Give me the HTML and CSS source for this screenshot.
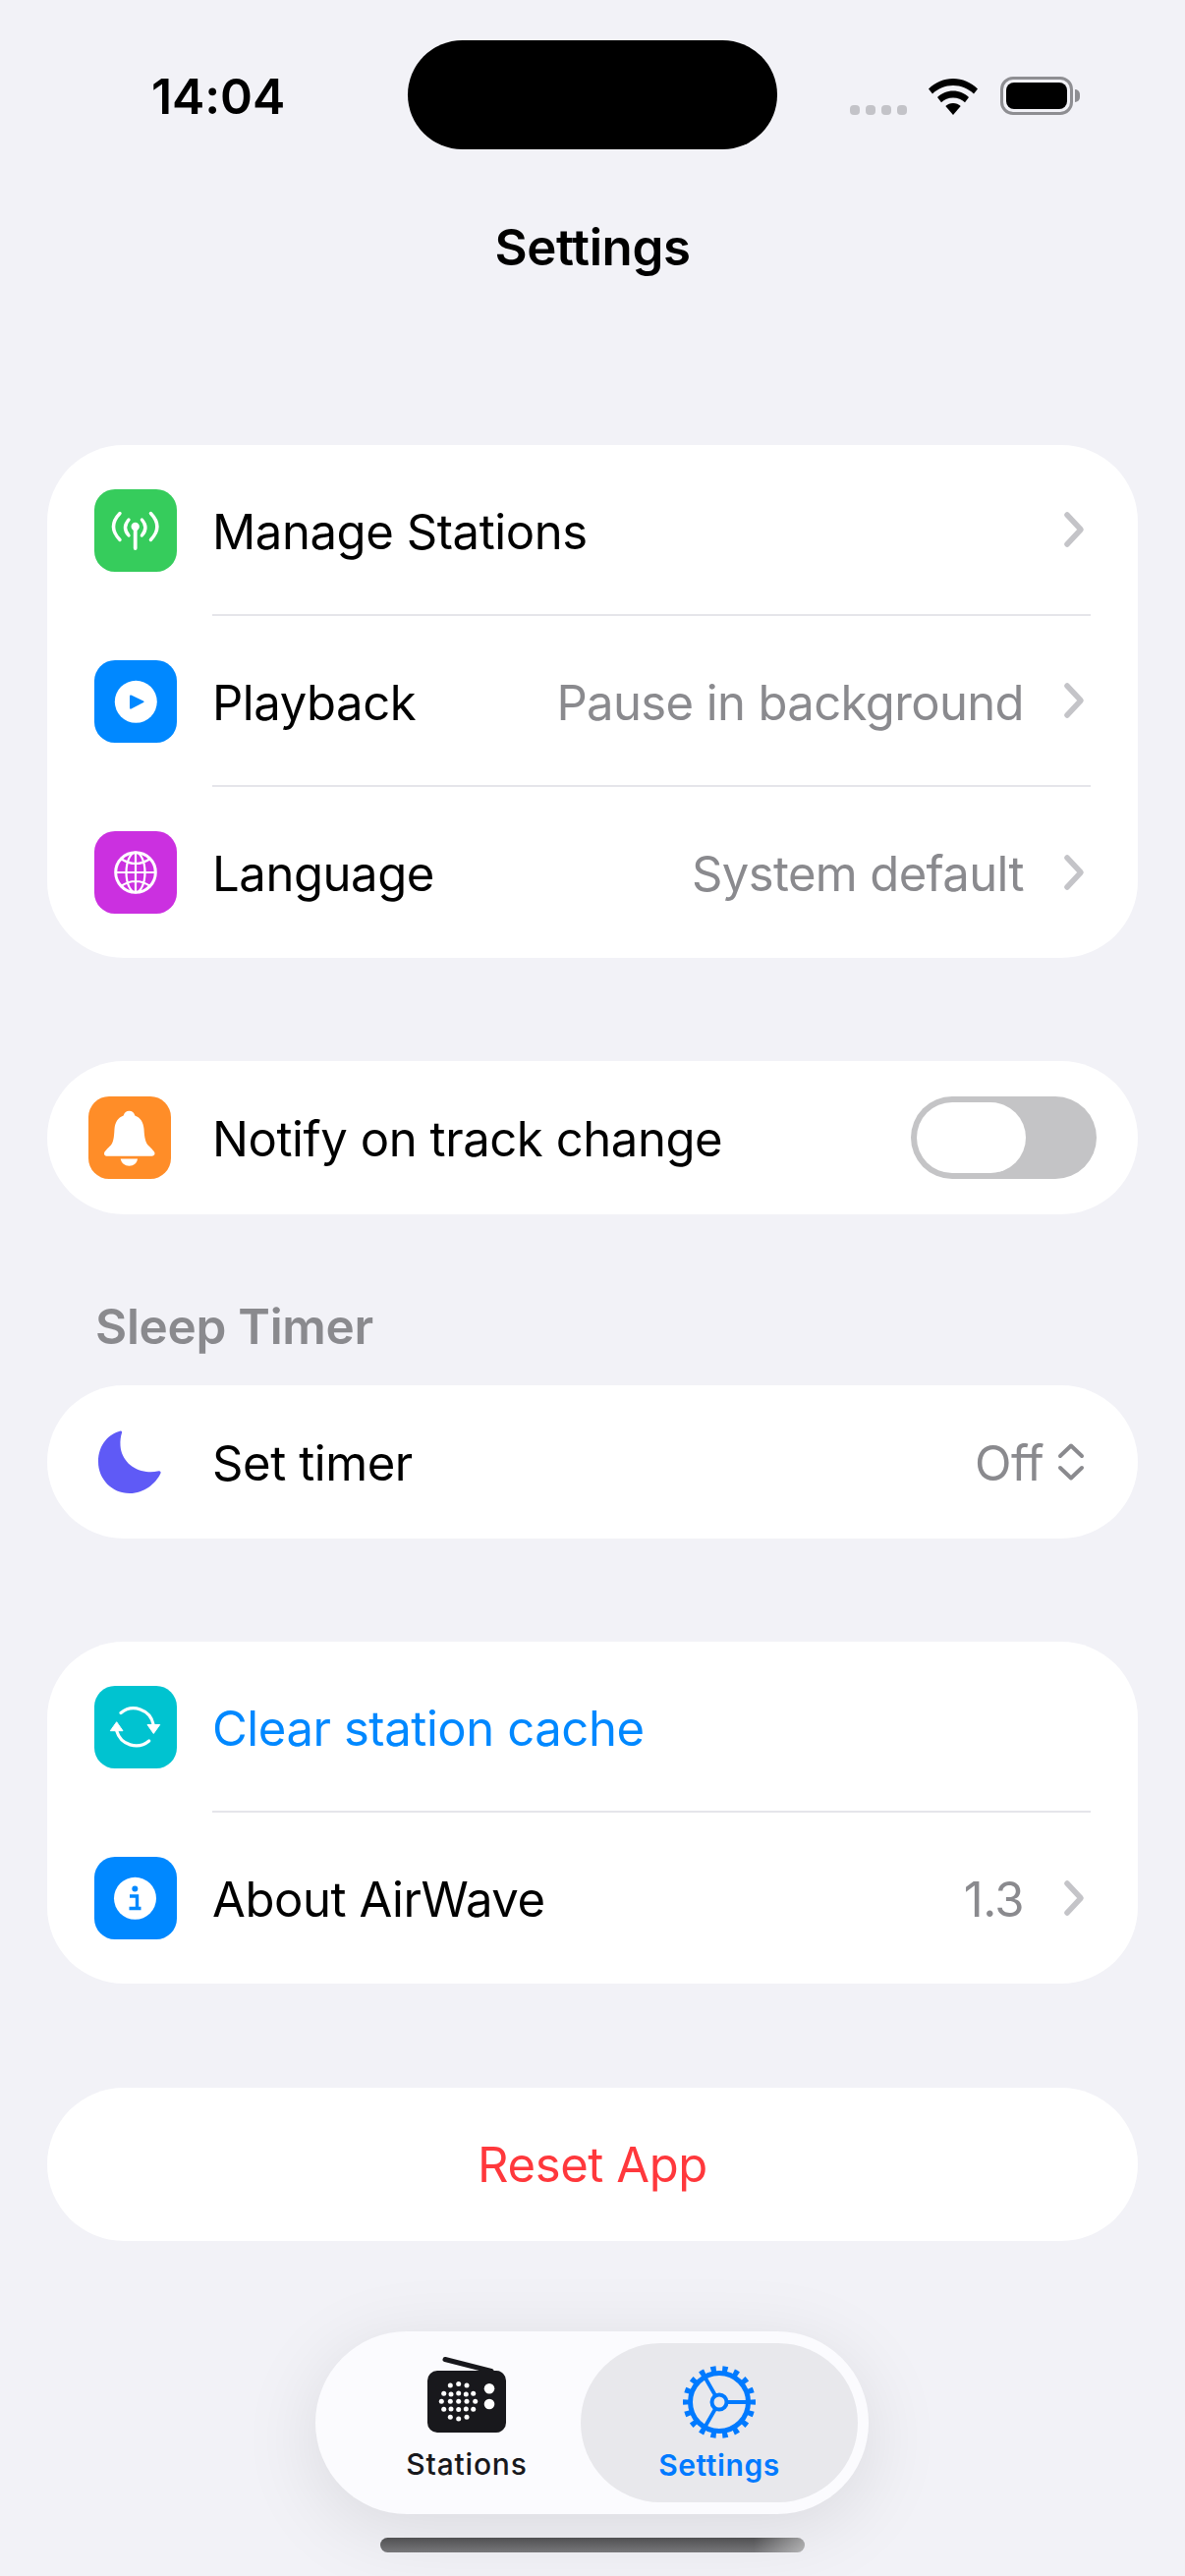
FILE: index.html
```html
<!DOCTYPE html>
<html lang="en">
<head>
<meta charset="utf-8">
<title>Settings</title>
<link rel="stylesheet" href="styles.css">
</head>
<body>
<div class="screen">
  <header class="status">
    <div class="status-time">14:04</div>
    <div class="island"></div>
    <div class="status-right">
      <div class="signal"><i></i><i></i><i></i><i></i></div>
      <svg class="wifi" width="50" height="37" viewBox="0 0 50 37"><path d="M25 0C15.500 0 7 3.800 0 10.500L4 15.500C9.500 10.200 17 7 25 7S40.500 10.200 46 15.500L50 10.500C43 3.800 34.500 0 25 0Z"/><path d="M25 12.500C18.800 12.500 13.200 15 9 19L13 24.200C16.100 21.200 20.300 19.400 25 19.400S33.900 21.200 37 24.200L41 19C36.800 15 31.200 12.500 25 12.500Z"/><path d="M25 25C22 25 19.400 26.100 17.300 28L25 37L32.700 28C30.600 26.100 28 25 25 25Z"/></svg>
      <div class="battery"><div class="battery-shell"><div class="battery-fill"></div></div><div class="battery-cap"></div></div>
    </div>
  </header>

  <h1 class="title">Settings</h1>

  <main class="content">
    <section class="card card-first">
      <div class="row">
        <div class="tile tile-green">
          <svg width="84" height="84" viewBox="0 0 84 84" fill="none" stroke="#fff" stroke-linecap="round"><path d="M41.700 38V60" stroke-width="3.800"/><circle cx="41.700" cy="38" r="4.200" fill="#fff" stroke="none"/><path d="M35 31Q28 39 35 47M48.400 31Q55.400 39 48.400 47M26 24.500Q13 38 26 51.500M57.400 24.500Q70.400 38 57.400 51.500" stroke-width="3.400"/></svg>
        </div>
        <div class="row-main line">
          <span class="label">Manage Stations</span>
          <svg class="chev" width="22" height="38" viewBox="0 0 22 38"><path d="M4 4L18 19L4 34" fill="none" stroke="#c4c4c8" stroke-width="5.500" stroke-linecap="round" stroke-linejoin="round"/></svg>
        </div>
      </div>
      <div class="row">
        <div class="tile tile-blue">
          <svg width="84" height="84" viewBox="0 0 84 84"><circle cx="42.300" cy="42.300" r="21.500" fill="#fff"/><path d="M37.500 35.500L50 41.500Q51.500 42.300 50 43.100L37.500 49.500Q36 50 36 48.500V36.500Q36 35 37.500 35.500Z" fill="#0088ff"/></svg>
        </div>
        <div class="row-main line">
          <span class="label">Playback</span>
          <span class="value">Pause in background</span>
          <svg class="chev" width="22" height="38" viewBox="0 0 22 38"><path d="M4 4L18 19L4 34" fill="none" stroke="#c4c4c8" stroke-width="5.500" stroke-linecap="round" stroke-linejoin="round"/></svg>
        </div>
      </div>
      <div class="row">
        <div class="tile tile-purple">
          <svg width="84" height="84" viewBox="0 0 84 84" fill="none" stroke="#fff" stroke-width="2.200"><circle cx="42" cy="42" r="20.300" stroke-width="3"/><ellipse cx="42" cy="42" rx="9.500" ry="20.300"/><path d="M42 21.700V62.300M21.700 42H62.300M27 28Q42 38 57 28M27 56Q42 46 57 56"/></svg>
        </div>
        <div class="row-main">
          <span class="label">Language</span>
          <span class="value">System default</span>
          <svg class="chev" width="22" height="38" viewBox="0 0 22 38"><path d="M4 4L18 19L4 34" fill="none" stroke="#c4c4c8" stroke-width="5.500" stroke-linecap="round" stroke-linejoin="round"/></svg>
        </div>
      </div>
    </section>

    <section class="card pill notify">
      <div class="tile tile-orange">
        <svg width="84" height="84" viewBox="0 0 84 84" fill="#fff"><path d="M41.500 14.700C44.500 14.700 46.500 16.500 47.300 19.500C53 21.500 56 26.500 56.500 33C57 42 58 46.500 61 50C64 53 67.500 56 67.500 58C67.500 59.800 66 60.700 64.500 60.700H18.500C17 60.700 16 59.800 16 58C16 56 19.500 53 22.500 50C25.500 46.500 26 42 26.500 33C27 26.500 30 21.500 35.700 19.500C36.500 16.500 38.500 14.700 41.500 14.700Z"/><path d="M32.700 63.500H50C49.500 68 46 70.700 41.500 70.700S33.500 68 32.700 63.500Z"/></svg>
      </div>
      <span class="label">Notify on track change</span>
      <div class="toggle"><div class="knob"></div></div>
    </section>

    <h2 class="section-title">Sleep Timer</h2>

    <section class="card pill timer">
      <svg class="moon" width="66" height="66" viewBox="0 0 66 66"><path d="M23.500 1.500C12 4.500 1 15 1 33C1 50 14.500 65 33 65C48 65 59.500 55 64.500 44.500C65 43 64 42 62.500 42.300C58 43.300 54 43.500 50 43C36 41.500 24.500 31 23.500 16.500C23.200 11.500 23.800 7 25 3.500C25.500 2 24.700 1.200 23.500 1.500Z" fill="#5f5af6"/></svg>
      <span class="label">Set timer</span>
      <span class="value">Off</span>
      <svg class="updown" width="28" height="40" viewBox="0 0 28 40"><path d="M3 14L14 3.500L25 14M3 26L14 36.500L25 26" fill="none" stroke="#8a8a8e" stroke-width="4" stroke-linecap="round" stroke-linejoin="round"/></svg>
    </section>

    <section class="card card-gap">
      <div class="row">
        <div class="tile tile-teal">
          <svg width="84" height="84" viewBox="0 0 84 84"><path d="M27 27.500A20.500 20.500 0 0 1 60 39M55.700 56A20.500 20.500 0 0 1 22.700 45.700" fill="none" stroke="#fff" stroke-width="3.200" stroke-linecap="round"/><path d="M54 39.500H66.700L60.300 48.500ZM22.700 36.700L29 45.700H16.300Z" fill="#fff" stroke="#fff" stroke-width="1" stroke-linejoin="round"/></svg>
        </div>
        <div class="row-main line">
          <span class="label label-link">Clear station cache</span>
        </div>
      </div>
      <div class="row">
        <div class="tile tile-blue">
          <svg width="84" height="84" viewBox="0 0 84 84"><circle cx="41.500" cy="42.300" r="21.500" fill="#fff"/><circle cx="41.300" cy="32.500" r="3" fill="#0088ff"/><path d="M36 40H43.500V51.500M35.500 52.500H47.500" fill="none" stroke="#0088ff" stroke-width="3.400"/></svg>
        </div>
        <div class="row-main">
          <span class="label">About AirWave</span>
          <span class="value">1.3</span>
          <svg class="chev" width="22" height="38" viewBox="0 0 22 38"><path d="M4 4L18 19L4 34" fill="none" stroke="#c4c4c8" stroke-width="5.500" stroke-linecap="round" stroke-linejoin="round"/></svg>
        </div>
      </div>
    </section>

    <section class="card pill reset">Reset App</section>
  </main>

  <nav class="tabbar">
    <div class="tab tab-stations">
      <svg width="90" height="84" viewBox="0 0 90 84">
        <path d="M23 5.500L70 17.500" stroke="#18181c" stroke-width="5" stroke-linecap="round"/>
        <rect x="5" y="17" width="80" height="63" rx="10" fill="#18181c"/>
        <g fill="#fff">
          <circle cx="68" cy="35.300" r="5.300"/><circle cx="68" cy="51" r="5.300"/>
          <circle cx="28.300" cy="32" r="2.500"/><circle cx="36.700" cy="30.500" r="2.500"/><circle cx="45" cy="32" r="2.500"/>
          <circle cx="21.700" cy="40.300" r="2.500"/><circle cx="29" cy="41" r="2.500"/><circle cx="36.700" cy="40" r="2.500"/><circle cx="44.300" cy="41" r="2.500"/><circle cx="51.700" cy="40.300" r="2.500"/>
          <circle cx="19.300" cy="48.300" r="2.500"/><circle cx="28.300" cy="48.300" r="2.500"/><circle cx="36.700" cy="48.300" r="2.500"/><circle cx="45" cy="48.300" r="2.500"/><circle cx="53.700" cy="48.300" r="2.500"/>
          <circle cx="21.700" cy="56.300" r="2.500"/><circle cx="29" cy="56" r="2.500"/><circle cx="36.700" cy="56.500" r="2.500"/><circle cx="44.300" cy="56" r="2.500"/><circle cx="51.700" cy="56.300" r="2.500"/>
          <circle cx="28.300" cy="64.300" r="2.500"/><circle cx="36.700" cy="66" r="2.500"/><circle cx="45" cy="64.300" r="2.500"/>
        </g>
      </svg>
      <span class="tab-label tab-label-stations">Stations</span>
    </div>
    <div class="tab tab-settings">
      <svg width="84" height="84" viewBox="0 0 84 84" fill="none" stroke="#007aff">
        <circle cx="42" cy="42" r="33.500" stroke-width="7" pathLength="180" stroke-dasharray="4.500 5.500" stroke-dashoffset="2.250"/>
        <circle cx="42" cy="42" r="29.500" stroke-width="5"/>
        <circle cx="42" cy="42" r="7.500" stroke-width="4"/>
        <path d="M49.500 42H71M38.200 35.500L27 16M38.200 48.500L27 68" stroke-width="3.800"/>
      </svg>
      <span class="tab-label tab-label-active">Settings</span>
    </div>
  </nav>
  <div class="home-indicator"></div>
</div>
</body>
</html>
```

FILE: styles.css
```css
* { box-sizing: border-box; margin: 0; padding: 0; }

html, body {
  width: 1206px;
  height: 2622px;
  overflow: hidden;
  background: #f2f2f7;
}

body {
  font-family: "Inter", "Liberation Sans", sans-serif;
  color: #000;
}

.screen {
  position: relative;
  width: 1206px;
  height: 2622px;
  overflow: hidden;
}

/* status bar */
.status {
  display: flex;
  align-items: flex-start;
  height: 152px;
  padding-top: 41px;
}

.status-time {
  width: 415px;
  padding: 34px 0 0 154px;
  font-size: 50px;
  line-height: 46px;
  font-weight: 600;
  letter-spacing: -0.1px;
}

.island {
  width: 376px;
  height: 111px;
  background: #000;
  border-radius: 56px;
}

.status-right {
  display: flex;
  align-items: flex-end;
  height: 76px;
  padding-left: 74px;
}

.signal {
  display: flex;
  gap: 6px;
}

.signal i {
  display: block;
  width: 10px;
  height: 10px;
  border-radius: 4px;
  background: #c3c3c8;
}

.wifi { margin-left: 22px; fill: #000; }

.battery {
  display: flex;
  align-items: center;
  margin-left: 23px;
}

.battery-shell {
  width: 74px;
  height: 39px;
  padding: 3px;
  border: 3px solid #8e8e92;
  border-radius: 13px;
}

.battery-fill {
  width: 100%;
  height: 100%;
  background: #000;
  border-radius: 8px;
}

.battery-cap {
  width: 5px;
  height: 13px;
  margin-left: 2px;
  background: #8e8e92;
  border-radius: 0 6px 6px 0;
}

/* title */
.title {
  margin-top: 70px;
  height: 60px;
  font-size: 51px;
  line-height: 60px;
  font-weight: 600;
  letter-spacing: -0.4px;
  text-align: center;
}

/* content */
.content {
  display: flex;
  flex-direction: column;
  padding: 171px 48px 0;
}

.card {
  background: #fff;
  border-radius: 78px;
}

.card-first { height: 522px; }

.card-gap { margin-top: 105px; }

.pill {
  display: flex;
  align-items: center;
  height: 156px;
}

.row {
  display: flex;
  align-items: center;
  height: 174px;
  padding-left: 48px;
}

.row-main {
  flex: 1;
  display: flex;
  align-items: center;
  height: 100%;
  margin-left: 36px;
  margin-right: 48px;
  padding-right: 6px;
}

.row-main.line {
  border-bottom: 2px solid #e5e5ea;
}

.row-main.line .label,
.row-main.line .value {
  padding-top: 6px;
}

.tile {
  flex: none;
  width: 84px;
  height: 84px;
  border-radius: 21px;
}

.tile svg { display: block; }

.tile-green { background: #36cc5c; }
.tile-blue { background: #0088ff; }
.tile-purple { background: #cb30e0; }
.tile-orange { background: #ff8d28; }
.tile-teal { background: #00c3d0; }

.label {
  padding-top: 4px;
  font-size: 49px;
  line-height: 60px;
  letter-spacing: -0.42px;
  white-space: nowrap;
}

.label-link { color: #0088ff; }

.value {
  margin-left: auto;
  padding-top: 4px;
  font-size: 49px;
  line-height: 60px;
  letter-spacing: -0.62px;
  color: #8a8a8e;
  white-space: nowrap;
}

.chev {
  flex: none;
  margin-left: auto;
}

.value + .chev { margin-left: 40px; }

/* notify */
.notify {
  margin-top: 105px;
  padding-left: 42px;
  padding-right: 42px;
}

.notify .label { margin-left: 42px; }

.toggle {
  margin-left: auto;
  width: 189px;
  height: 84px;
  padding: 6px;
  background: #c4c4c6;
  border-radius: 42px;
}

.knob {
  width: 111px;
  height: 72px;
  background: #fff;
  border-radius: 36px;
}

/* sleep */
.section-title {
  margin: 84px 0 0 49px;
  height: 60px;
  font-size: 49.500px;
  line-height: 60px;
  font-weight: 600;
  letter-spacing: -0.3px;
  color: #8a8a8e;
}

.timer {
  margin-top: 30px;
  padding-left: 51px;
  padding-right: 54px;
}

.moon { flex: none; }
.timer .label { margin-left: 51px; }
.updown { flex: none; margin-left: 14px; }

/* reset */
.reset {
  margin-top: 106px;
  justify-content: center;
  color: #ff383c;
  font-size: 49px;
  letter-spacing: -0.4px;
}

/* tab bar */
.tabbar {
  position: absolute;
  left: 321px;
  top: 2373px;
  display: flex;
  align-items: center;
  width: 563px;
  height: 186px;
  padding-left: 38px;
  background: #fbfbfe;
  border-radius: 93px;
  box-shadow: 0 16px 80px rgba(0, 0, 0, 0.1);
}

.tab {
  display: flex;
  flex-direction: column;
  align-items: center;
  justify-content: flex-start;
  height: 162px;
  padding-top: 18px;
}

.tab svg { display: block; flex: none; }

.tab-stations { width: 232px; padding-top: 11px; }

.tab-settings {
  width: 282px;
  background: #e8e8ec;
  border-radius: 81px;
}

.tab-label {
  margin-top: 4px;
  font-size: 30px;
  line-height: 36px;
  font-weight: 500;
  color: #18181c;
  white-space: nowrap;
}

.tab-label-stations { margin-top: 10px; letter-spacing: 0.8px; }

.tab-label-active { color: #007aff; font-weight: 600; letter-spacing: 0.6px; }

.home-indicator {
  position: absolute;
  left: 387px;
  top: 2583px;
  width: 432px;
  height: 15px;
  border-radius: 8px;
  background:
    linear-gradient(to right, rgba(255, 255, 255, 0) 88%, rgba(255, 255, 255, 0.45) 100%),
    linear-gradient(to bottom, #505052, #77777a);
}
```
